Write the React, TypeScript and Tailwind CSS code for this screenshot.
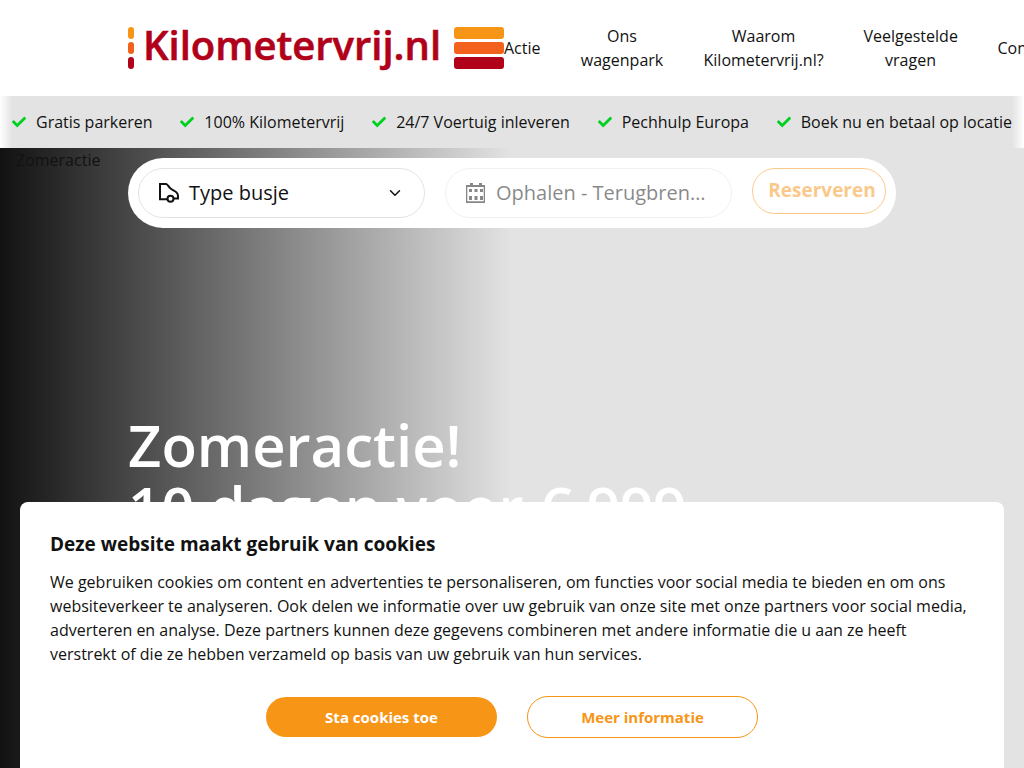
import { FaCheck } from "react-icons/fa";
import { ChevronDown } from "lucide-react";

const navItems = [
  { label: "Actie", width: "" },
  { label: "Ons wagenpark", width: "w-[83px]" },
  { label: "Waarom Kilometervrij.nl?", width: "w-[120px]" },
  { label: "Veelgestelde vragen", width: "w-[94px]" },
  { label: "Contact", width: "" },
];

const usps = [
  "Gratis parkeren",
  "100% Kilometervrij",
  "24/7 Voertuig inleveren",
  "Pechhulp Europa",
  "Boek nu en betaal op locatie",
];

function Logo() {
  return (
    <a href="#" aria-label="Kilometervrij.nl" className="shrink-0">
      <svg width="376" height="48" viewBox="0 0 376 48">
        <rect x="0" y="3" width="6" height="12" rx="3" fill="#f79517" />
        <rect x="0" y="18" width="6" height="12" rx="3" fill="#f3621d" />
        <rect x="0" y="33" width="6" height="12" rx="3" fill="#b1001a" />
        <text
          x="15"
          y="36"
          fill="#b1001a"
          stroke="#b1001a"
          strokeWidth="0.6"
          fontFamily="'Open Sans', sans-serif"
          fontWeight="600"
          fontSize="40"
        >
          Kilometervrij.nl
        </text>
        <rect x="326" y="3" width="50" height="12" rx="3" fill="#f79517" />
        <rect x="326" y="18" width="50" height="12" rx="3" fill="#f3621d" />
        <rect x="326" y="33" width="50" height="12" rx="3" fill="#b1001a" />
      </svg>
    </a>
  );
}

function VanIcon() {
  return (
    <svg
      width="20"
      height="20"
      viewBox="0 0 20 20"
      fill="none"
      stroke="#121212"
      strokeWidth="2"
      className="shrink-0"
    >
      <path d="M8 16.200H1V1H7.200C8.500 1 9.500 3.500 11 5C13 7 15.500 7.800 17.300 9.200C18.800 10.400 19 11.500 19 13V15.500H15" />
      <circle cx="11.500" cy="15.800" r="3" />
    </svg>
  );
}

function CalendarIcon() {
  return (
    <svg
      width="20"
      height="20"
      viewBox="0 0 20 20"
      fill="#121212"
      className="shrink-0"
    >
      <path d="M0 2H19V20H0ZM1.300 4V18.300H17.700V4Z" fillRule="evenodd" />
      <path d="M4 0H7V3H4ZM13 0H16V3H13Z" />
      <path d="M3 6H6V9H3ZM8.500 6H11.500V9H8.500ZM14 6H17V9H14Z" />
      <path d="M3 13H6V17H3ZM8.500 13H11.500V17H8.500ZM14 13H17V17H14Z" />
    </svg>
  );
}

function Header() {
  return (
    <header className="flex h-24 items-center overflow-hidden bg-white pl-[12.5%]">
      <Logo />
      <nav className="flex shrink-0 items-center gap-10 text-center leading-6">
        {navItems.map((item) => (
          <a key={item.label} href="#" className={item.width}>
            {item.label}
          </a>
        ))}
      </nav>
    </header>
  );
}

function UspBar() {
  return (
    <ul className="flex h-[52px] items-center justify-between overflow-hidden bg-[linear-gradient(90deg,#fff,#e3e3e3_12px,#e3e3e3_calc(100%-12px),#fff)] px-3 whitespace-nowrap">
      {usps.map((usp) => (
        <li key={usp} className="flex items-center gap-2.5">
          <FaCheck size={14} color="#00d020" />
          {usp}
        </li>
      ))}
    </ul>
  );
}

function BookingForm() {
  return (
    <form className="flex items-start gap-5 rounded-[36px] bg-white p-2.5 text-xl">
      <button
        type="button"
        className="flex h-[50px] min-w-0 flex-1 items-center gap-2.5 rounded-full border border-[#e3e3e3] px-5"
      >
        <VanIcon />
        <span className="flex-1 text-left">Type busje</span>
        <ChevronDown size={18} strokeWidth={2} />
      </button>
      <button
        type="button"
        disabled
        className="flex h-[50px] min-w-0 flex-1 items-center gap-2.5 rounded-full border border-[#e3e3e3] px-5 opacity-50"
      >
        <CalendarIcon />
        <span className="truncate">Ophalen - Terugbrengen</span>
      </button>
      <button
        type="submit"
        disabled
        className="h-[46px] w-[134px] shrink-0 rounded-full border border-[#f79517] pb-0.5 pl-1.5 text-[19px] font-bold text-[#f79517] opacity-50"
      >
        Reserveren
      </button>
    </form>
  );
}

function Hero() {
  return (
    <main className="flex-1 bg-[linear-gradient(90deg,#121212,#e3e3e3_50%)]">
      <div className="relative px-[12.5%] pt-2.5">
        <span className="absolute top-0 left-4 leading-6">Zomeractie</span>
        <BookingForm />
        <h1 className="pt-[186px] text-[58px] leading-[62px] font-semibold text-white">
          Zomeractie!
          <br />
          10 dagen voor € 999,-
        </h1>
      </div>
    </main>
  );
}

function CookieDialog() {
  return (
    <section
      aria-labelledby="cookie-title"
      className="fixed inset-x-5 bottom-0 rounded-t-lg bg-white p-[30px]"
    >
      <h2 id="cookie-title" className="text-[19px] leading-6 font-bold">
        Deze website maakt gebruik van cookies
      </h2>
      <p className="mt-3.5 leading-6">
        We gebruiken cookies om content en advertenties te personaliseren, om
        functies voor social media te bieden en om ons websiteverkeer te
        analyseren. Ook delen we informatie over uw gebruik van onze site met
        onze partners voor social media, adverteren en analyse. Deze partners
        kunnen deze gegevens combineren met andere informatie die u aan ze heeft
        verstrekt of die ze hebben verzameld op basis van uw gebruik van hun
        services.
      </p>
      <div className="mt-[30px] flex items-center justify-center gap-[30px] text-[15px] font-bold">
        <button
          type="button"
          className="h-10 w-[231px] rounded-full bg-[#f79517] text-white"
        >
          Sta cookies toe
        </button>
        <button
          type="button"
          className="h-[42px] w-[231px] rounded-full border border-[#f79517] text-[#f79517]"
        >
          Meer informatie
        </button>
      </div>
    </section>
  );
}

export default function App() {
  return (
    <div className="flex min-h-screen flex-col bg-white font-['Open_Sans',sans-serif] text-base text-[#121212]">
      <Header />
      <UspBar />
      <Hero />
      <CookieDialog />
    </div>
  );
}
